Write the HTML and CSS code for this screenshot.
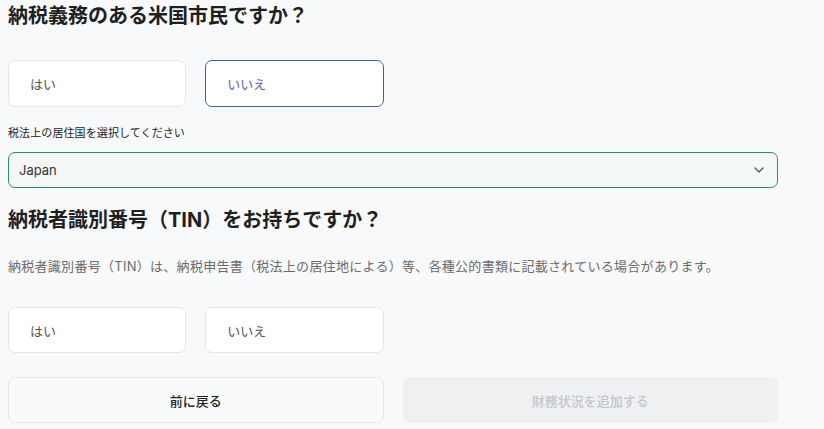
FILE: index.html
```html
<!DOCTYPE html>
<html lang="ja">
<head>
<meta charset="utf-8">
<title>TIN</title>
<link rel="stylesheet" href="styles.css">
</head>
<body>
<div class="page">
  <h1 class="title">納税義務のある米国市民ですか？</h1>
  <div class="choices first">
    <button class="choice">はい</button>
    <button class="choice selected">いいえ</button>
  </div>
  <label class="label">税法上の居住国を選択してください</label>
  <div class="select">
    <span>Japan</span>
    <svg class="chev" width="10" height="6" viewBox="0 0 10 6"><path d="M1 1l4 4 4-4" fill="none" stroke="#666" stroke-width="1.6" stroke-linecap="round" stroke-linejoin="round"/></svg>
  </div>
  <h2 class="title t2">納税者識別番号（TIN）をお持ちですか？</h2>
  <p class="desc">納税者識別番号（TIN）は、納税申告書（税法上の居住地による）等、各種公的書類に記載されている場合があります。</p>
  <div class="choices second">
    <button class="choice">はい</button>
    <button class="choice">いいえ</button>
  </div>
  <div class="actions">
    <button class="back">前に戻る</button>
    <button class="next" disabled>財務状況を追加する</button>
  </div>
</div>
</body>
</html>
```
FILE: styles.css
```css
* { box-sizing: border-box; }
html, body { margin: 0; padding: 0; background: #f8f9fa; }
body {
  font-family: Inter, "Noto Sans CJK JP", sans-serif;
  color: #222;
  overflow: hidden;
}
.page { width: 786px; padding: 0 8px; }
.title {
  margin: 2px 0 0;
  font-size: 20px;
  line-height: 28px;
  font-weight: 700;
  color: #1f1f1f;
}
.t2 { margin-top: 18px; }
.choices {
  display: grid;
  grid-template-columns: repeat(4, 1fr);
  column-gap: 19px;
}
.choices.first { margin-top: 30px; }
.choices.second { margin-top: 31px; }
.choice {
  height: 47px;
  background: #fff;
  border: 1px solid #e6e7ea;
  border-radius: 7px;
  text-align: left;
  padding: 0 0 0 21px;
  font-family: inherit;
  font-size: 13px;
  color: #555;
}
.second .choice { height: 46px; }
.choice.selected { border-color: #3a639e; color: #5a62ad; }
.label {
  display: block;
  margin-top: 18px;
  font-size: 11px;
  line-height: 16px;
  letter-spacing: 0.1px;
  color: #222;
}
.select {
  margin-top: 11px;
  height: 36px;
  border: 1px solid #2f8a6a;
  border-radius: 7px;
  background: #f3f8f6;
  display: flex;
  align-items: center;
  justify-content: space-between;
  padding: 0 13px 0 10px;
  font-size: 13px;
  color: #333;
}
.desc {
  margin: 22px 0 0;
  font-size: 13px;
  line-height: 20px;
  letter-spacing: 0.28px;
  color: #6b6b6b;
}
.actions {
  margin-top: 24px;
  display: grid;
  grid-template-columns: 1fr 1fr;
  column-gap: 19px;
}
.actions button {
  height: 46px;
  border-radius: 7px;
  font-family: inherit;
  font-size: 13px;
  font-weight: 500;
}
.back {
  background: #f9fafb;
  border: 1px solid #e4e6e9;
  color: #222;
}
.next {
  background: #eef0f2;
  border: 1px solid #eef0f2;
  color: #c4c6cc;
}
```
